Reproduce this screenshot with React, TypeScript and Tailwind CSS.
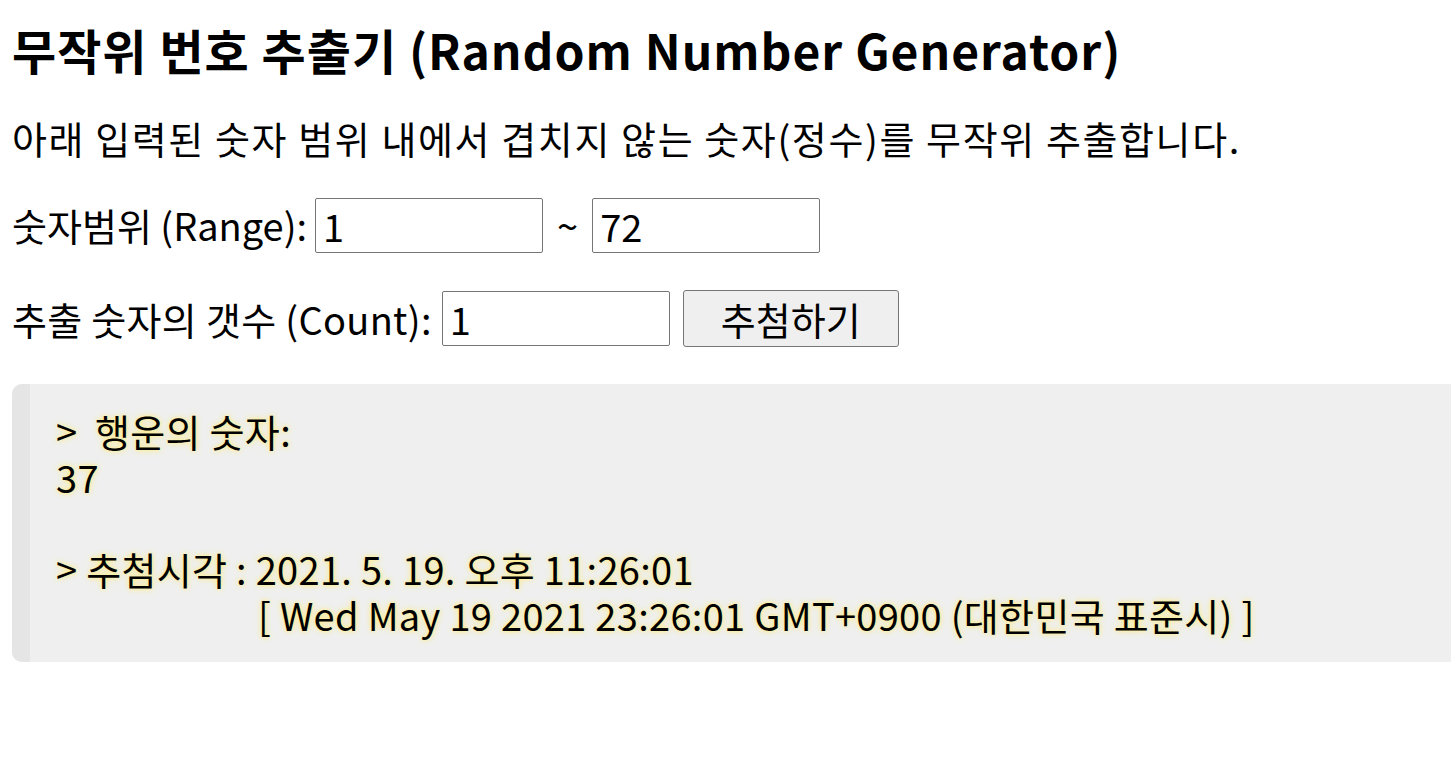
import React from 'react';

const font = { fontFamily: '"Noto Sans CJK KR", "Noto Sans", sans-serif' };

export default function App() {
  return (
    <div className="min-h-screen bg-white text-black text-[38px] leading-[46px]" style={font}>
      <div className="pt-[19px] pl-[12px]">
        <h3 className="text-[48px] font-bold leading-[60px] tracking-[1px]">무작위 번호 추출기 (Random Number Generator)</h3>
        <p className="mt-[36px] tracking-[1.6px]">아래 입력된 숫자 범위 내에서 겹치지 않는 숫자(정수)를 무작위 추출합니다.</p>

        {/* range */}
        <div className="mt-[36px] flex items-center h-[56px]">
          <span>숫자범위 (Range):</span>
          <input
            defaultValue="1"
            className="ml-[8px] w-[228px] h-[55px] border border-[#767676] rounded-[2px] px-[7px] text-[38px] outline-none"
            style={font}
          />
          <span className="mx-[14px]">~</span>
          <input
            defaultValue="72"
            className="w-[228px] h-[55px] border border-[#767676] rounded-[2px] px-[7px] text-[38px] outline-none"
            style={font}
          />
        </div>

        {/* count */}
        <div className="mt-[37px] flex items-center h-[57px]">
          <span className="tracking-[0.3px]">추출 숫자의 갯수 (Count):</span>
          <input
            defaultValue="1"
            className="ml-[10px] w-[228px] h-[55px] border border-[#767676] rounded-[2px] px-[7px] text-[38px] outline-none"
            style={font}
          />
          <button
            className="ml-[13px] w-[216px] h-[57px] bg-[#efefef] border border-[#767676] rounded-[3px] text-[38px]"
            style={font}
          >
            추첨하기
          </button>
        </div>

        {/* result */}
        <div className="mt-[37px] flex bg-[#efefef] rounded-l-[10px] overflow-hidden">
          <div className="w-[18px] shrink-0 bg-[#e5e5e5]" />
          <div className="pl-[26px] pt-[24px] pb-[24px] tracking-[0.3px] [text-shadow:0_0_6px_#ffe96a,0_0_3px_#fff4b0]">
            <div>&gt;&nbsp; 행운의 숫자:</div>
            <div>37</div>
            <div className="h-[46px]" />
            <div>&gt; 추첨시각 : 2021. 5. 19. 오후 11:26:01</div>
            <div className="pl-[202px]">[ Wed May 19 2021 23:26:01 GMT+0900 (대한민국 표준시) ]</div>
          </div>
        </div>
      </div>
    </div>
  );
}
